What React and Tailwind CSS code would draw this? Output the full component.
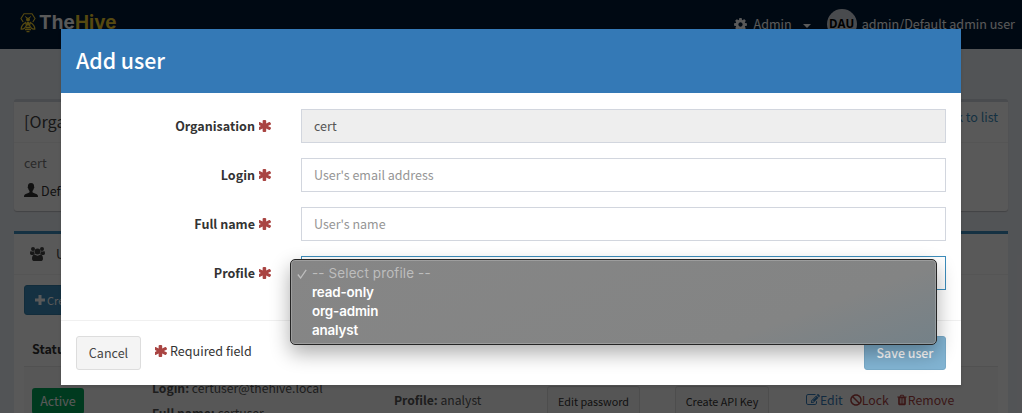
import React from "react";
import { FaBan } from "react-icons/fa";

const PATHS = {
  asterisk:
    "M1482 1050q46 26 59.5 77.5t-12.5 97.5l-64 110q-26 46-77.5 59.5t-97.5-12.5l-266-153v307q0 52-38 90t-90 38h-128q-52 0-90-38t-38-90v-307l-266 153q-46 26-97.5 12.5t-77.5-59.5l-64-110q-26-46-12.5-97.5t59.5-77.5l266-154-266-154q-46-26-59.5-77.5t12.5-97.5l64-110q26-46 77.5-59.5t97.500 12.5l266 153v-307q0-52 38-90t90-38h128q52 0 90 38t38 90v307l266-153q46-26 97.5-12.5t77.5 59.5l64 110q26 46 12.5 97.5t-59.5 77.5l-266 154z",
  edit: "M888 1184l116-116-152-152-116 116v56h96v96h56zm440-720q-16-16-33 1l-350 350q-17 17-1 33t33-1l350-350q17-17 1-33zm80 594v190q0 119-84.5 203.5t-203.5 84.5h-832q-119 0-203.5-84.5t-84.5-203.5v-832q0-119 84.5-203.5t203.5-84.5h832q63 0 117 25 15 7 18 23 3 17-9 29l-49 49q-14 14-32 8-23-6-45-6h-832q-66 0-113 47t-47 113v832q0 66 47 113t113 47h832q66 0 113-47t47-113v-126q0-13 9-22l64-64q15-15 35-7t20 29zm-96-738l288 288-672 672h-288v-288zm444 132l-92 92-288-288 92-92q28-28 68-28t68 28l152 152q28 28 28 68t-28 68z",
  trash:
    "M704 1376v-704q0-14-9-23t-23-9h-64q-14 0-23 9t-9 23v704q0 14 9 23t23 9h64q14 0 23-9t9-23zm256 0v-704q0-14-9-23t-23-9h-64q-14 0-23 9t-9 23v704q0 14 9 23t23 9h64q14 0 23-9t9-23zm256 0v-704q0-14-9-23t-23-9h-64q-14 0-23 9t-9 23v704q0 14 9 23t23 9h64q14 0 23-9t9-23zm-544-992h448l-48-117q-7-9-17-11h-317q-10 2-17 11zm928 32v64q0 14-9 23t-23 9h-96v948q0 83-47 143.5t-113 60.5h-832q-66 0-113-58.5t-47-141.5v-952h-96q-14 0-23-9t-9-23v-64q0-14 9-23t23-9h309l70-167q15-37 54-63t79-26h320q40 0 79 26t54 63l70 167h309q14 0 23 9t9 23z",
  cog: "M1152 896q0-106-75-181t-181-75-181 75-75 181 75 181 181 75 181-75 75-181zm512-109v222q0 12-8 23t-20 13l-185 28q-19 54-39 91 35 50 107 138 10 12 10 25t-9 23q-27 37-99 108t-94 71q-12 0-26-9l-138-108q-44 23-91 38-16 136-29 186-7 28-36 28h-222q-14 0-24.5-8.5t-11.5-21.5l-28-184q-49-16-90-37l-141 107q-10 9-25 9-14 0-25-11-126-114-165-168-7-10-7-23 0-12 8-23 15-21 51-66.5t54-70.5q-27-50-41-99l-183-27q-13-2-21-12.5t-8-23.5v-222q0-12 8-23t19-13l186-28q14-46 39-92-40-57-107-138-10-12-10-24 0-10 9-23 26-36 98.5-107.5t94.5-71.5q13 0 26 10l138 107q44-23 91-38 16-136 29-186 7-28 36-28h222q14 0 24.5 8.5t11.5 21.5l28 184q49 16 90 37l142-107q9-9 24-9 13 0 25 10 129 119 165 170 7 8 7 22 0 12-8 23-15 21-51 66.5t-54 70.5q26 50 41 98l183 28q13 2 21 12.5t8 23.5z",
};

function Icon({ name, className }) {
  return (
    <svg viewBox="0 0 1792 1792" fill="currentColor" className={className}>
      <path d={PATHS[name]} />
    </svg>
  );
}

function Asterisk() {
  return (
    <svg viewBox="250 128 1292 1536" preserveAspectRatio="none" fill="currentColor" className="h-[12px] w-[12px] shrink-0 text-[#a94442]">
      <path d={PATHS.asterisk} />
    </svg>
  );
}

function UsersIcon() {
  return (
    <svg viewBox="0 0 15 14" className="h-[14px] w-[15px] shrink-0" fill="currentColor">
      <circle cx="3" cy="2" r="2" />
      <circle cx="12" cy="2" r="2" />
      <circle cx="7.500" cy="4.500" r="3" />
      <path d="M.9 4C.2 4.300 0 5.500 0 6.300 0 7.500.7 8 1.500 8h1.800c.5-.6 1.100-.9 1.900-1C4.200 6.200 3.900 5.200 4 4.200 3 4.800 1.800 4.700.9 4zM14.100 4c.7.300.9 1.500.9 2.300 0 1.200-.7 1.700-1.500 1.700h-1.800c-.5-.6-1.100-.9-1.900-1 1-.8 1.300-1.800 1.200-2.800 1 .6 2.200.5 3.100-.2z" />
      <path d="M4.600 7.600C2.800 7.600 2 9.500 2 11.700 2 13.200 3 14 4.300 14h6.400c1.300 0 2.300-.8 2.300-2.300 0-2.200-.8-4.100-2.600-4.100-1.800 1.400-4 1.400-5.800 0z" />
    </svg>
  );
}

function Logo() {
  return (
    <div className="flex h-[22px] items-center gap-[3px]">
      <svg viewBox="0 0 16 20" className="h-[20px] w-[16px] shrink-0">
        <path d="M3.200 9 1 5.500 4 .7h8l3 4.800L12.800 9" fill="none" stroke="#f3d02f" strokeWidth="1.100" />
        <path d="M5 3.500 7 4.800M11 3.500 9 4.800" stroke="#f3d02f" strokeWidth="1" />
        <circle cx="8" cy="6.600" r="2" fill="#f3d02f" />
        <path d="M7 9h2l1 2-2 2-2-2z" fill="#f3d02f" />
        <path d="M5.600 9.500C3 11 1.200 13.500 1.200 16c2 .4 4-1 5.300-3.800zM10.400 9.500c2.600 1.500 4.400 4 4.400 6.500-2 .4-4-1-5.300-3.800z" fill="none" stroke="#f3d02f" strokeWidth="1.300" />
        <path d="M6 14.500h4M5 16.500h6M6.500 18.700h3" stroke="#f3d02f" strokeWidth="1.300" />
      </svg>
      <div className="font-['Inter',sans-serif] text-[18.8px] leading-[22px] font-bold tracking-[0.15px] text-white">
        The<span className="text-[#f3d02f]">Hive</span>
      </div>
    </div>
  );
}

function Navbar() {
  return (
    <header className="flex h-[49px] shrink-0 items-start justify-between bg-[#001a38] pr-[7px] pl-[20px] text-white">
      <div className="pt-[12px]">
        <Logo />
      </div>
      <div className="flex h-[48px] items-center">
        <Icon name="cog" className="h-[15px] w-[15px]" />
        <span className="ml-[6px] text-[12.55px]">Admin</span>
        <svg viewBox="0 0 8 4" className="mt-[3px] ml-[11px] h-[4px] w-[8px]" fill="currentColor">
          <path d="M0 0h8L4 4z" />
        </svg>
        <span className="ml-[16px] flex h-[30px] w-[30px] items-center justify-center rounded-full bg-[#d2d6de] font-['Open_Sans',sans-serif] text-[11.5px] font-bold text-black">
          DAU
        </span>
        <span className="ml-[5px] text-[12.55px]">admin/Default admin user</span>
      </div>
    </header>
  );
}

function Page() {
  return (
    <div className="flex h-[413px] flex-col overflow-hidden bg-[#ecf0f5]">
      <Navbar />
      <section className="mx-[14px] mt-[50px] h-[112px] shrink-0 rounded-[3px] border-t-[3px] border-[#d2d6de] bg-white shadow-[0_1px_1px_rgba(0,0,0,0.2)]">
        <div className="flex h-[41px] items-center justify-between border-b border-[#f4f4f4] px-[10px]">
          <h3 className="mb-[2px] text-[16.2px] text-[#444]">[Organisation]</h3>
          <a className="mb-[9px] text-[12.55px] text-[#3c8dbc]">Back to list</a>
        </div>
        <p className="mt-[10px] ml-[10px] text-[12.55px] leading-[20px] text-[#777]">cert</p>
        <p className="mt-[8px] ml-[10px] flex items-center gap-[3px] text-[12.55px] leading-[20px] text-[#333]">
          <svg viewBox="0 0 14 14" className="mb-[2px] h-[14px] w-[14px]" fill="currentColor">
            <path d="M7 0C4.600 0 3.800 1.700 3.900 3.700c-.4.200-.3 1.300.2 1.600.2 1.200.7 2 1.400 2.700v1.300C5 10 2.500 10.700 1.200 11.300.3 11.700 0 12.700 0 14h14c0-1.300-.3-2.300-1.200-2.700C11.500 10.700 9 10 8.500 9.300V8c.7-.7 1.200-1.500 1.400-2.700.5-.3.600-1.400.2-1.600C10.200 1.700 9.400 0 7 0z" />
          </svg>
          Default organisation
        </p>
      </section>

      <section className="mx-[14px] mt-[20px] h-[220px] shrink-0 border-t-[3px] border-[#3c8dbc] bg-white">
        <div className="flex h-[41px] items-center gap-[11px] border-b border-[#f4f4f4] pl-[16px] text-[12.55px] text-[#444]">
          <UsersIcon />
          Users
        </div>
        <div className="mt-[10px] ml-[10px] flex h-[30px] w-[120px] items-center gap-[2px] rounded-[3px] border border-[#367fa9] bg-[#3c8dbc] pl-[10px] text-[11px] text-white">
          <svg viewBox="0 0 10 10" className="h-[10px] w-[10px]" fill="currentColor">
            <path d="M3.500 0h3v3.500H10v3H6.500V10h-3V6.500H0v-3h3.500z" />
          </svg>
          Create new user
        </div>
        <div className="mx-[10px] mt-[16px] h-[36px] border-b border-[#e8e8e8] pt-[8px] pl-[8px] text-[12.55px] leading-[20px] font-bold text-[#333]">Status</div>
        <div className="mx-[10px] flex h-[60px] bg-[#f9f9f9] text-[12.55px] text-[#333]">
          <div className="w-[120px] pt-[21px] pl-[8px]">
            <span className="flex h-[26px] w-[52px] items-center justify-center rounded-[3px] bg-[#00a65a] text-white">Active</span>
          </div>
          <div className="w-[242px] pt-[8px] pl-[8px] text-[12.15px] leading-[25px] text-[#555]">
            <div>
              <b>Login:</b> certuser@thehive.local
            </div>
            <div>
              <b>Full name:</b> certuser
            </div>
          </div>
          <div className="w-[161px] pt-[20px] pl-[8px] text-[12.15px] leading-[25px] text-[#555]">
            <b>Profile:</b> analyst
          </div>
          <div className="flex gap-[35px] pt-[19px] text-[10.8px]">
            <span className="flex h-[30px] w-[93px] items-center justify-center rounded-[3px] border border-[#ddd] bg-[#f4f4f4]">Edit password</span>
            <span className="flex h-[30px] w-[94px] items-center justify-center rounded-[3px] border border-[#ddd] bg-[#f4f4f4]">Create API Key</span>
          </div>
          <div className="ml-[37px] flex h-[66px] items-center text-[12.3px]">
            <span className="flex items-center text-[#337ab7]">
              <Icon name="edit" className="h-[14px] w-[14px]" />
              Edit
            </span>
            <span className="ml-[7px] flex items-center text-[#a94442]">
              <FaBan className="h-[12px] w-[12px]" />
              Lock
            </span>
            <span className="ml-[7px] flex items-center text-[#a94442]">
              <Icon name="trash" className="h-[14px] w-[12px]" />
              Remove
            </span>
          </div>
        </div>
      </section>
    </div>
  );
}

function Field({ label, children }) {
  return (
    <div className="flex h-[34px] items-center">
      <label className="flex w-[210px] items-center justify-end gap-[4px] text-[12.55px] font-bold text-[#333]">
        {label}
        <Asterisk />
      </label>
      <div className="ml-[30px] h-[34px] flex-1">{children}</div>
    </div>
  );
}

function ProfileMenu() {
  return (
    <ul className="absolute top-[230px] left-[229px] h-[86px] w-[647px] rounded-[5px] border border-[#252525] bg-[linear-gradient(160deg,#868686_0%,#838484_75%,#748188_100%)] pt-[4px] font-['Inter',sans-serif] text-[13.4px] leading-[19px] font-semibold tracking-[-0.15px] text-white shadow-[inset_0_0_0_1px_rgba(255,255,255,0.2),0_8px_20px_rgba(0,0,0,0.33)]">
      <li className="flex items-center pl-[6px] font-normal text-[#bdbdbd]">
        <svg viewBox="0 0 10 10" className="mr-[5px] h-[10px] w-[10px]" fill="none" stroke="currentColor" strokeWidth="1.300">
          <path d="M.8 5.500 3.600 9 9.200.8" />
        </svg>
        <span className="tracking-[0.15px]">-- Select profile --</span>
      </li>
      <li className="pl-[21px]">read-only</li>
      <li className="pl-[21px]">org-admin</li>
      <li className="pl-[21px]">analyst</li>
    </ul>
  );
}

function Modal() {
  return (
    <div role="dialog" className="relative flex h-[356px] w-[900px] flex-col bg-white shadow-[0_2px_3px_rgba(0,0,0,0.125)]">
      <div className="flex h-[64px] items-center bg-[#3479b6] px-[15px] pb-[2px] text-[21.3px] font-medium text-white">Add user</div>
      <div className="flex h-[227px] flex-col gap-[15px] pt-[16px] pr-[15px]">
        <Field label="Organisation">
          <div className="flex h-full items-center border border-[#d2d6de] bg-[#eee] px-[12px] text-[12.55px] text-[#555]">cert</div>
        </Field>
        <Field label="Login">
          <input className="block h-full w-full border border-[#d2d6de] px-[12px] pb-[2px] text-[12.5px] placeholder:text-[#959595]" placeholder="User's email address" />
        </Field>
        <Field label="Full name">
          <input className="block h-full w-full border border-[#d2d6de] px-[12px] pb-[2px] text-[12.5px] placeholder:text-[#959595]" placeholder="User's name" />
        </Field>
        <Field label="Profile">
          <div className="h-full border border-[#3c8dbc]" />
        </Field>
      </div>
      <div className="flex h-[65px] items-start justify-between border-t border-[#f0f0f0] px-[15px] pt-[15px] text-[12.55px]">
        <div className="flex items-start">
          <button className="h-[34px] w-[65px] rounded-[3px] border border-[#ddd] bg-[#f4f4f4] text-[#444]">Cancel</button>
          <span className="ml-[14px] flex h-[30px] items-center gap-[3px] text-[#333]">
            <Asterisk />
            Required field
          </span>
        </div>
        <button className="h-[34px] w-[82px] rounded-[3px] border border-[#79aac8] bg-[#82b4d3] text-[12.4px] font-medium text-white">Save user</button>
      </div>
      <ProfileMenu />
    </div>
  );
}

export default function App() {
  return (
    <div className="relative h-[413px] w-[1022px] overflow-hidden font-['Noto_Sans_CJK_SC','Noto_Sans',sans-serif]">
      <Page />
      <div className="absolute inset-0 flex items-start justify-center bg-black/65 pt-[29px]">
        <Modal />
      </div>
    </div>
  );
}
